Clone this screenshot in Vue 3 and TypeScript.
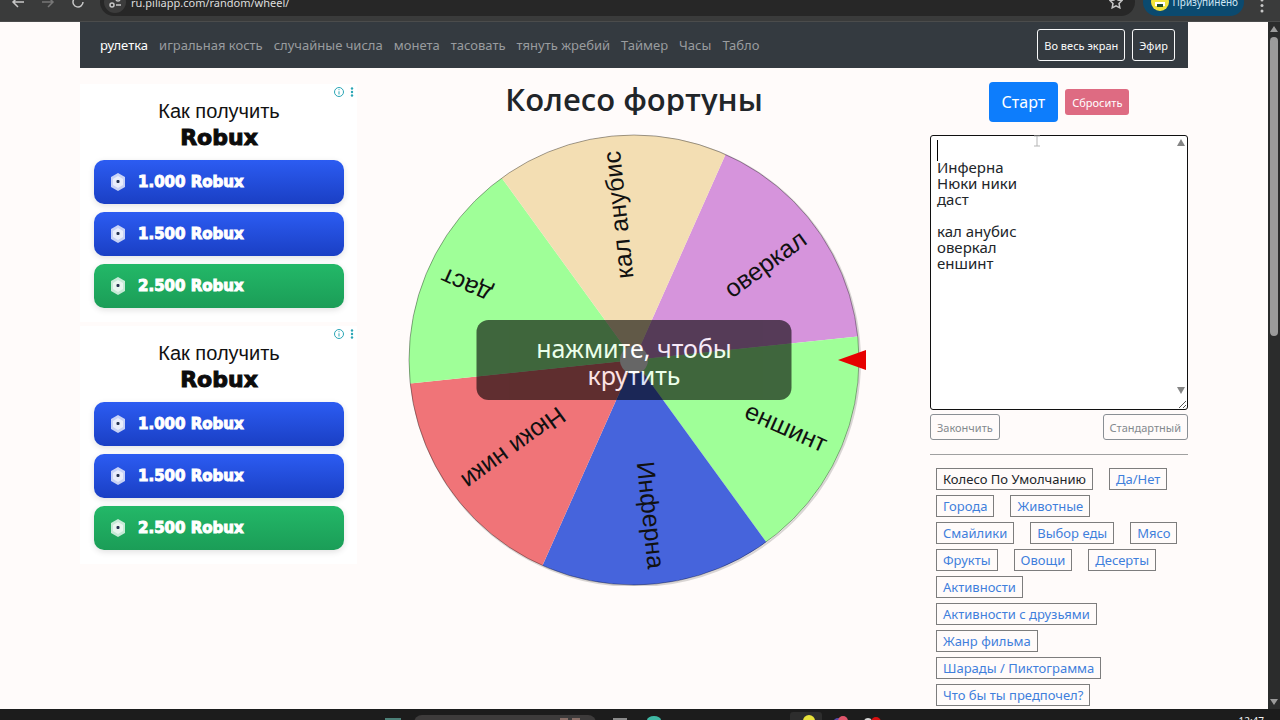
<script setup lang="ts">
import { ref } from 'vue'

interface Sector {
  label: string
  color: string
  angle: number
}

const navLinks: string[] = [
  'рулетка', 'игральная кость', 'случайные числа', 'монета', 'тасовать',
  'тянуть жребий', 'Таймер', 'Часы', 'Табло',
]

const ads: string[][] = [
  ['1.000 Robux', '1.500 Robux', '2.500 Robux'],
  ['1.000 Robux', '1.500 Robux', '2.500 Robux'],
]

const presets: string[] = [
  'Колесо По Умолчанию', 'Да/Нет', 'Города', 'Животные', 'Смайлики', 'Выбор еды', 'Мясо',
  'Фрукты', 'Овощи', 'Десерты', 'Активности', 'Активности с друзьями', 'Жанр фильма',
  'Шарады / Пиктограмма', 'Что бы ты предпочел?',
]

const entries = ref('\nИнферна\nНюки ники\nдаст\n\nкал анубис\nоверкал\nеншинт')

const sectors: Sector[] = [
  { label: 'оверкал', color: '#d694dc', angle: -36 },
  { label: 'еншинт', color: '#9fff98', angle: 24 },
  { label: 'Инферна', color: '#4664dc', angle: 84 },
  { label: 'Нюки ники', color: '#f07478', angle: 144 },
  { label: 'даст', color: '#9fff98', angle: 204 },
  { label: 'кал анубис', color: '#f3deb3', angle: 264 },
]

const RADIUS = 225

function slice(angle: number): string {
  const point = (deg: number) => {
    const rad = (deg * Math.PI) / 180
    return `${(RADIUS * Math.cos(rad)).toFixed(2)} ${(RADIUS * Math.sin(rad)).toFixed(2)}`
  }
  return `M0 0L${point(angle - 30)}A${RADIUS} ${RADIUS} 0 0 1 ${point(angle + 30)}Z`
}
</script>

<template>
  <div class="desktop">
    <header class="toolbar">
      <div class="nav-buttons">
        <button type="button" aria-label="Назад">
          <svg width="16" height="16" viewBox="0 0 16 16"><path d="M14 8H3M8 3L3 8l5 5" /></svg>
        </button>
        <button type="button" class="dim" aria-label="Вперёд">
          <svg width="16" height="16" viewBox="0 0 16 16"><path d="M2 8h11M8 3l5 5-5 5" /></svg>
        </button>
        <button type="button" aria-label="Обновить">
          <svg width="16" height="16" viewBox="0 0 16 16"><path d="M13 8a5 5 0 1 1-2-4M13 2v3h-3" /></svg>
        </button>
      </div>
      <div class="address">
        <span class="site-info">
          <svg width="14" height="14" viewBox="0 0 14 14"><path d="M1 4h5M8 10h5" /><circle cx="10" cy="4" r="2" /><circle cx="4" cy="10" r="2" /></svg>
        </span>
        <span class="url">ru.piliapp.com/random/wheel/</span>
        <svg class="star" width="14" height="14" viewBox="0 0 14 14"><path d="M7 1l2 4 4 .5-3 3 .8 4.3L7 10.800l-3.800 2L4 8.500l-3-3L5 5z" /></svg>
      </div>
      <button type="button" class="profile">
        <svg width="18" height="18" viewBox="0 0 18 18"><circle cx="9" cy="9" r="9" fill="#f2e33a" /><path d="M4 9h10v4H4z" fill="#fff" /><path d="M6 11h6v3H6z" fill="#234d24" /></svg>
        <span>Призупинено</span>
      </button>
      <button type="button" class="more" aria-label="Меню">
        <svg width="4" height="16" viewBox="0 0 4 16"><circle cx="2" cy="2" r="1.500" /><circle cx="2" cy="7.500" r="1.500" /><circle cx="2" cy="13" r="1.500" /></svg>
      </button>
    </header>

    <div class="viewport">
      <div class="page">
        <nav class="navbar">
          <a v-for="(link, i) in navLinks" :key="link" href="#" :class="{ active: i === 0 }">{{ link }}</a>
          <div class="nav-actions">
            <button type="button">Во весь экран</button>
            <button type="button">Эфир</button>
          </div>
        </nav>

        <main class="columns">
          <aside class="ads">
            <section v-for="(offers, n) in ads" :key="n" class="ad">
              <div class="ad-marks">
                <svg width="10" height="10" viewBox="0 0 10 10"><circle cx="5" cy="5" r="4.500" /><path d="M5 4.300v3.200M5 2.200v1" /></svg>
                <svg class="dots" width="4" height="10" viewBox="0 0 4 10"><circle cx="2" cy="1.500" r="1.200" /><circle cx="2" cy="5" r="1.200" /><circle cx="2" cy="8.500" r="1.200" /></svg>
              </div>
              <p class="ad-lead">Как получить</p>
              <p class="ad-brand">Robux</p>
              <button v-for="(offer, i) in offers" :key="offer" type="button" class="offer" :class="{ green: i === 2 }">
                <svg width="16" height="18" viewBox="0 0 16 18">
                  <path d="M8 0l7 4v10l-7 4-7-4V4z" fill="#fff" fill-opacity=".75" />
                  <path d="M8 3l5 3v6l-5 3-5-3V6z" fill="#fff" fill-opacity=".6" />
                  <rect x="6.500" y="7" width="3" height="3" rx="1" fill="#23304f" />
                </svg>
                <span>{{ offer }}</span>
              </button>
            </section>
          </aside>

          <section class="center">
            <h1>Колесо фортуны</h1>
            <div class="wheel">
              <svg viewBox="-226 -226 460 452" role="img" aria-label="Колесо">
                <circle class="shade" cx="1" cy="1" r="225" />
                <path v-for="s in sectors" :key="s.label" :d="slice(s.angle)" :fill="s.color" />
                <circle class="rim" r="225" />
                <text
                  v-for="s in sectors"
                  :key="s.label + '-t'"
                  x="210"
                  y="8"
                  text-anchor="end"
                  :transform="`rotate(${s.angle})`"
                >{{ s.label }}</text>
                <circle r="14" fill="#fff" />
                <path d="M204 0L232 -10V10Z" fill="#e60000" />
              </svg>
              <button type="button" class="hint">нажмите, чтобы крутить</button>
            </div>
          </section>

          <aside class="controls">
            <div class="run">
              <button type="button" class="start">Старт</button>
              <button type="button" class="reset">Сбросить</button>
            </div>
            <div class="editor">
              <textarea v-model="entries" aria-label="Варианты" spellcheck="false"></textarea>
              <i class="caret"></i>
              <svg class="up" width="8" height="7" viewBox="0 0 8 7"><path d="M4 0l4 7H0z" /></svg>
              <svg class="down" width="8" height="7" viewBox="0 0 8 7"><path d="M0 0h8L4 7z" /></svg>
              <svg class="grip" width="12" height="12" viewBox="0 0 12 12"><path d="M4 11l7-7M8 11l3-3" /></svg>
              <svg class="pointer" width="8" height="12" viewBox="0 0 8 12"><path d="M1 1h6M1 11h6M4 1v10" /></svg>
            </div>
            <div class="editor-actions">
              <button type="button">Закончить</button>
              <button type="button">Стандартный</button>
            </div>
            <hr />
            <div class="presets">
              <a v-for="(p, i) in presets" :key="p" href="#" :class="{ current: i === 0 }">{{ p }}</a>
            </div>
          </aside>
        </main>
      </div>

      <div class="scrollbar">
        <svg width="8" height="6" viewBox="0 0 8 6"><path d="M4 0l4 6H0z" /></svg>
        <span class="thumb"></span>
        <svg width="8" height="6" viewBox="0 0 8 6"><path d="M0 0h8L4 6z" /></svg>
      </div>
    </div>

    <footer class="taskbar">
      <svg width="516" height="11" viewBox="0 0 516 11">
        <path d="M1 9h16v2H1z" fill="#4c8078" />
        <rect x="30" y="6" width="182" height="20" rx="8" fill="#3d3b3b" />
        <path d="M176 9h8v2h-8zM188 9h8v2h-8z" fill="#8a6f68" />
        <path d="M229 9h14v2h-14z" fill="#8a8a8a" />
        <path d="M263 11a7 4 0 0 1 14 0z" fill="#3fb8a4" />
        <rect x="406" y="3" width="32" height="20" rx="3" fill="#2d2d2d" />
        <circle cx="425" cy="12" r="6" fill="#e8e23a" />
        <circle cx="454" cy="14" r="5" fill="#584aa8" />
        <circle cx="459" cy="12" r="5" fill="#e0566c" />
        <circle cx="484" cy="13" r="4" fill="#d8d8d8" />
        <circle cx="492" cy="13" r="5" fill="#d81010" />
      </svg>
      <time>12:47</time>
    </footer>
  </div>
</template>

<style>
html,
body {
  margin: 0;
  overflow: hidden;
}
</style>

<style scoped>
.desktop {
  display: flex;
  flex-direction: column;
  height: 100vh;
  font-family: 'Noto Sans', 'Open Sans', sans-serif;
  color: #212529;
  background: #fffbfa;
}
.desktop * {
  box-sizing: border-box;
}
button {
  font-family: inherit;
  margin: 0;
  padding: 0;
  border: 0;
  background: none;
  cursor: pointer;
}
a {
  text-decoration: none;
}

/* Browser toolbar */
.toolbar {
  display: flex;
  align-items: flex-end;
  flex: none;
  height: 22px;
  padding: 0 16px 5px 10px;
  overflow: hidden;
  background: #3a3b3b;
  border-bottom: 1px solid #4b4c4c;
}
.nav-buttons {
  display: flex;
  align-items: center;
  gap: 14px;
  height: 28px;
  margin-right: 14px;
}
.nav-buttons button {
  display: flex;
}
.nav-buttons svg,
.site-info svg,
.star {
  fill: none;
  stroke: #c7c7c7;
  stroke-width: 1.500;
}
.nav-buttons .dim svg {
  stroke: #777;
}
.address {
  display: flex;
  align-items: center;
  flex: 1;
  height: 28px;
  padding: 0 12px 0 4px;
  border-radius: 14px;
  background: #272727;
}
.site-info {
  display: flex;
  align-items: center;
  justify-content: center;
  width: 22px;
  height: 22px;
  margin-right: 5px;
  border-radius: 11px;
  background: #3c3c3c;
}
.url {
  flex: 1;
  padding-top: 2px;
  font-size: 11px;
  line-height: 24px;
  color: #dedede;
}
.profile {
  display: flex;
  align-items: center;
  gap: 4px;
  height: 28px;
  margin: 0 16px 0 8px;
  padding: 0 6px 0 8px;
  border-radius: 14px;
  background: #0b4a6f;
  color: #cfe6f5;
  font-size: 10px;
}
.more {
  display: flex;
  height: 18px;
}
.more svg {
  fill: #c7c7c7;
}

/* Page frame */
.viewport {
  display: flex;
  flex: 1;
  min-height: 0;
  overflow: hidden;
}
.page {
  flex: 1;
  min-width: 0;
  padding: 0 80px;
}
.scrollbar {
  display: flex;
  flex-direction: column;
  align-items: center;
  flex: none;
  width: 12px;
  padding: 4px 0;
  background: #2b2c2c;
}
.scrollbar svg {
  flex: none;
  fill: #9b9b9b;
}
.thumb {
  flex: none;
  width: 8px;
  height: 44%;
  margin: 5px 0 auto;
  border-radius: 4px;
  background: #9b9b9b;
}
.navbar {
  display: flex;
  align-items: center;
  gap: 11px;
  height: 46px;
  padding: 0 13px 0 20px;
  background: #343a40;
  font-size: 13px;
  white-space: nowrap;
}
.navbar a {
  color: #999c9f;
}
.navbar a.active {
  color: #fff;
}
.nav-actions {
  display: flex;
  gap: 7px;
  margin-left: auto;
}
.nav-actions button {
  height: 32px;
  padding: 0 6px;
  border: 1px solid #f8f9fa;
  border-radius: 3px;
  color: #f8f9fa;
  font-size: 11px;
}
.columns {
  display: grid;
  grid-template-columns: 1fr 2fr 1fr;
}

/* Ads */
.ads {
  display: flex;
  flex-direction: column;
  gap: 4px;
  padding-top: 16px;
}
.ad {
  position: relative;
  display: flex;
  flex-direction: column;
  align-items: center;
  padding: 16px 13px 14px 14px;
  background: #fff;
}
.ad-marks {
  position: absolute;
  top: 3px;
  right: 3px;
  display: flex;
  gap: 6px;
}
.ad-marks svg {
  fill: none;
  stroke: #2aa5b5;
}
.ad-marks .dots {
  fill: #2aa5b5;
  stroke: none;
}
.ad-lead {
  margin: 0;
  font: 500 20px/22px 'Liberation Sans', Arial, sans-serif;
  color: #111;
}
.ad-brand {
  margin: 4px 0 10px;
  font: bold 22px/24px 'DejaVu Sans', sans-serif;
  color: #0c0c0c;
  -webkit-text-stroke: 1px currentColor;
}
.offer {
  display: flex;
  align-items: center;
  gap: 12px;
  width: 100%;
  height: 44px;
  padding: 0 16px;
  border-radius: 10px;
  background: linear-gradient(#2c5cf2, #1a3fc4);
  box-shadow: 0 2px 6px #0000001f;
  color: #fff;
  font: bold 15px/20px 'DejaVu Sans', sans-serif;
  -webkit-text-stroke: 1px currentColor;
}
.offer + .offer {
  margin-top: 8px;
}
.offer.green {
  background: linear-gradient(#23b868, #1b9d57);
}

/* Wheel */
.center {
  display: flex;
  flex-direction: column;
  align-items: center;
}
h1 {
  height: 32px;
  margin: 15px 0 19px;
  overflow: hidden;
  font-family: 'Open Sans', 'Noto Sans', sans-serif;
  font-size: 31px;
  font-weight: 600;
  line-height: 32px;
}
.wheel {
  position: relative;
  width: 450px;
}
.wheel > svg {
  display: block;
  width: 460px;
  margin-left: -1px;
}
.wheel text {
  font: 25px 'Liberation Sans', Arial, sans-serif;
  fill: #111;
}
.shade {
  fill: none;
  stroke: #00000026;
  stroke-width: 2;
}
.rim {
  fill: none;
  stroke: #00000059;
}
.hint {
  position: absolute;
  top: 50%;
  left: 50%;
  width: 70%;
  padding: 15px 40px 11px;
  border-radius: 12px;
  transform: translate(-50%, -50%);
  opacity: .8;
  background: #000000bf;
  color: #fff;
  font-size: 25px;
  line-height: 27px;
}

/* Controls */
.controls {
  padding: 14px 0 0 19px;
}
.run {
  display: flex;
  align-items: center;
  justify-content: center;
  gap: 7px;
  margin-bottom: 13px;
}
.start {
  height: 40px;
  padding: 0 13px;
  border-radius: 4px;
  background: #0d7dfc;
  color: #fff;
  font-size: 16px;
}
.reset {
  height: 26px;
  padding: 0 7px;
  border-radius: 3px;
  background: #de6b82;
  color: #fff;
  font-size: 11px;
}
.editor {
  position: relative;
}
textarea {
  display: block;
  width: 100%;
  height: 275px;
  padding: 7px 20px 6px 6px;
  overflow: hidden;
  resize: none;
  border: 1px solid #101010;
  border-radius: 3px;
  outline: 0;
  background: #fff;
  color: #212529;
  font: 15px/16px 'Noto Sans', 'Open Sans', sans-serif;
}
.editor svg {
  position: absolute;
  fill: #858585;
}
.caret {
  position: absolute;
  top: 5px;
  left: 7px;
  width: 1px;
  height: 21px;
  background: #000;
}
.editor .up {
  top: 4px;
  right: 3px;
}
.editor .down {
  right: 3px;
  bottom: 16px;
}
.editor .grip {
  right: 1px;
  bottom: 1px;
  fill: none;
  stroke: #555;
}
.editor .pointer {
  top: 0;
  left: 103px;
  fill: none;
  stroke: #b5b5b5;
}
.editor-actions {
  display: flex;
  justify-content: space-between;
  margin-top: 4px;
}
.editor-actions button {
  height: 26px;
  padding: 0 6px;
  border: 1px solid #8a8f94;
  border-radius: 3px;
  color: #84898e;
  font-size: 11px;
}
hr {
  height: 1px;
  margin: 14px 0 13px;
  border: 0;
  background: #a0a0a0;
}
.presets {
  display: flex;
  flex-wrap: wrap;
  gap: 5px 16px;
  padding: 0 8px 0 6px;
}
.presets a {
  height: 22px;
  padding: 0 6px;
  border: 1px solid #7d7d7d;
  color: #3f7fdc;
  font-size: 13px;
  line-height: 21px;
  white-space: nowrap;
}
.presets .current {
  color: #212529;
}

/* Taskbar */
.taskbar {
  display: flex;
  align-items: flex-start;
  justify-content: flex-end;
  flex: none;
  height: 11px;
  padding-right: 16px;
  overflow: hidden;
  background: #1c1c1c;
}
.taskbar svg {
  margin-right: 338px;
}
time {
  padding-top: 5px;
  color: #f2f2f2;
  font-size: 10px;
  line-height: 14px;
}
</style>
